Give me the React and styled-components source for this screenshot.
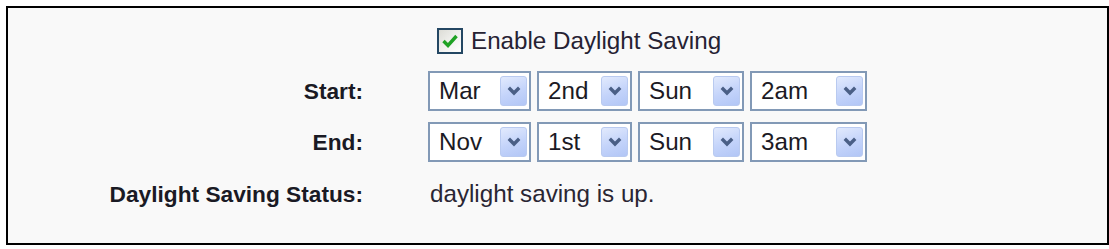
import React from "react";
import styled, { createGlobalStyle } from "styled-components";

const Global = createGlobalStyle`
  html, body { margin: 0; padding: 0; background: #ffffff; }
  body { font-family: "Liberation Sans", Arial, sans-serif; }
`;

const Page = styled.div`
  padding: 6px 0 4px 6px;
  width: 1103px;
`;

const Panel = styled.div`
  box-sizing: border-box;
  width: 1103px;
  height: 239px;
  border: 2px solid #000;
  background: #f9f9f9;
  padding-top: 8px;
`;

const Form = styled.div`
  display: grid;
  grid-template-columns: 355px auto;
  grid-template-rows: 50px 50px 52px 52px;
  column-gap: 65px;
  align-items: center;
`;

const Label = styled.div`
  text-align: right;
  font-weight: bold;
  font-size: 22.7px;
  color: #1a1a24;
  white-space: nowrap;
`;

const Field = styled.div`
  display: flex;
  align-items: center;
  gap: 6px;
`;

const CheckLabel = styled.label`
  display: flex;
  align-items: center;
  gap: 8px;
  margin-left: 9px;
  font-size: 24.2px;
  color: #262233;
  white-space: nowrap;
`;

const Box = styled.span`
  box-sizing: border-box;
  width: 26px;
  height: 26px;
  border: 2px solid #244763;
  background: linear-gradient(135deg, #dcdcd6 0%, #f4f4f2 60%, #ffffff 100%);
  display: flex;
  align-items: center;
  justify-content: center;
`;

const Select = styled.div`
  box-sizing: border-box;
  width: ${(p) => p.$w}px;
  height: 40px;
  border: 2px solid #8299b6;
  background: #fff;
  display: flex;
  align-items: center;
  justify-content: space-between;
  padding: 3px 2px 3px 9px;
  font-size: 24.2px;
  color: #1c1a24;
`;

const Arrow = styled.span`
  box-sizing: border-box;
  width: 27px;
  height: 100%;
  border: 1px solid #b9caf0;
  border-radius: 3px;
  background: linear-gradient(160deg, #e2eafd 0%, #c3d3fa 55%, #b2c6f6 100%);
  display: flex;
  align-items: center;
  justify-content: center;
`;

const Status = styled.div`
  font-size: 24.2px;
  color: #2a2633;
  margin-left: 2px;
  white-space: nowrap;
`;

const Chevron = () => (
  <svg width="14" height="10" viewBox="0 0 14 10">
    <path d="M1.8 1.8 L7 7 L12.2 1.8" fill="none" stroke="#4a5f86" strokeWidth="3.4" />
  </svg>
);

const Check = () => (
  <svg width="18" height="16" viewBox="0 0 18 16">
    <path d="M2.5 8 L7 12.5 L15.5 3" fill="none" stroke="#1fa224" strokeWidth="3.4" />
  </svg>
);

const Drop = ({ w, value }) => (
  <Select $w={w}>
    <span>{value}</span>
    <Arrow>
      <Chevron />
    </Arrow>
  </Select>
);

export default function App() {
  return (
    <Page>
      <Global />
      <Panel>
        <Form>
          <span />
          <Field>
            <CheckLabel>
              <Box>
                <Check />
              </Box>
              Enable Daylight Saving
            </CheckLabel>
          </Field>

          <Label>Start:</Label>
          <Field>
            <Drop w={103} value="Mar" />
            <Drop w={95} value="2nd" />
            <Drop w={106} value="Sun" />
            <Drop w={117} value="2am" />
          </Field>

          <Label>End:</Label>
          <Field>
            <Drop w={103} value="Nov" />
            <Drop w={95} value="1st" />
            <Drop w={106} value="Sun" />
            <Drop w={117} value="3am" />
          </Field>

          <Label>Daylight Saving Status:</Label>
          <Status>daylight saving is up.</Status>
        </Form>
      </Panel>
    </Page>
  );
}
